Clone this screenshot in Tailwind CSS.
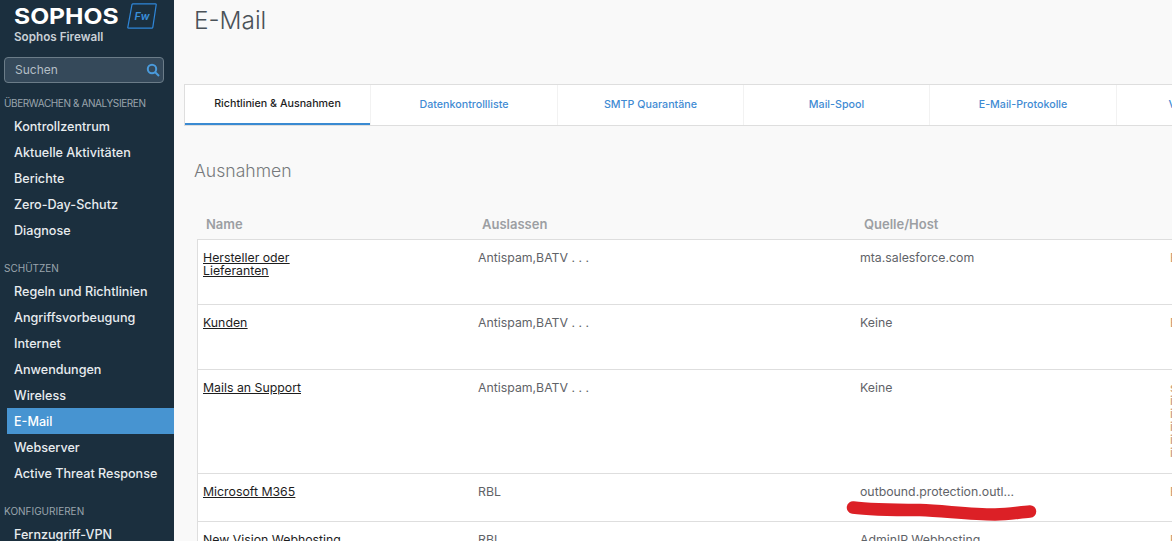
<!DOCTYPE html>
<html lang="de">
<head>
  <meta charset="UTF-8" />
  <title>Sophos Firewall - E-Mail</title>
  <script src="https://cdn.jsdelivr.net/npm/@tailwindcss/browser@4"></script>
</head>
<body class="h-[541px] w-[1172px] overflow-hidden bg-[#f9f9f9] font-['Inter',sans-serif] text-[#5f6368]">
  <div class="flex h-[541px]">

    <!-- Sidebar -->
    <aside class="w-[174px] h-[541px] shrink-0 overflow-hidden bg-[#1b2f3e] text-[12.6px] font-medium text-[#e8ecef]">
      <div class="relative h-[57px] pl-[14px] pt-[4px]">
        <div class="origin-left scale-x-[1.12] text-[22px] font-bold leading-[24px] text-white">SOPHOS</div>
        <div class="mt-[2px] text-[11.7px] font-semibold leading-[15px] text-[#c9d0d6]">Sophos Firewall</div>
        <svg class="absolute left-[127px] top-[3px]" width="30" height="26" viewBox="0 0 30 26" fill="none">
          <path d="M5 1.5Q5.3 .8 6 .8H28.5Q29.4 .8 29.2 1.7L25.8 24.3Q25.6 25.2 24.7 25.2H1.5Q.6 25.2 .8 24.3Z" stroke="#2f86d8" stroke-width="1.2" />
          <text x="7.5" y="17" font-size="10.5" font-style="italic" font-weight="600" fill="#3a8fdc" font-family="Inter, sans-serif">Fw</text>
        </svg>
      </div>
      <div class="ml-[4px] flex h-[26px] w-[160px] items-center justify-between rounded-[4px] border border-[#6b7c88] bg-[#35495a] pl-[10px] pr-[3px] text-[12px] font-normal text-[#b4bec5]">
        <span>Suchen</span>
        <svg width="14" height="14" viewBox="0 0 14 14" fill="none" stroke="#4a9bdc" stroke-width="2">
          <circle cx="6" cy="6" r="4.2" />
          <path d="M9 9l4 4" />
        </svg>
      </div>

      <div class="mt-[14px] pl-[4px] text-[10px] font-normal leading-[12px] tracking-[-0.4px] text-[#9aa5ad]">ÜBERWACHEN &amp; ANALYSIEREN</div>
      <nav class="mt-[5px]">
        <div class="flex h-[26px] items-center pl-[14px]">Kontrollzentrum</div>
        <div class="flex h-[26px] items-center pl-[14px]">Aktuelle Aktivitäten</div>
        <div class="flex h-[26px] items-center pl-[14px]">Berichte</div>
        <div class="flex h-[26px] items-center pl-[14px]">Zero-Day-Schutz</div>
        <div class="flex h-[26px] items-center pl-[14px]">Diagnose</div>
      </nav>

      <div class="mt-[18px] pl-[4px] text-[10px] font-normal leading-[12px] text-[#9aa5ad]">SCHÜTZEN</div>
      <nav class="mt-[4px]">
        <div class="flex h-[26px] items-center pl-[14px] pt-[2px]">Regeln und Richtlinien</div>
        <div class="flex h-[26px] items-center pl-[14px] pt-[2px]">Angriffsvorbeugung</div>
        <div class="flex h-[26px] items-center pl-[14px] pt-[2px]">Internet</div>
        <div class="flex h-[26px] items-center pl-[14px] pt-[2px]">Anwendungen</div>
        <div class="flex h-[26px] items-center pl-[14px] pt-[2px]">Wireless</div>
        <div class="ml-[7px] flex h-[26px] items-center bg-[#4794d1] pl-[7px] pt-[2px] text-white">E-Mail</div>
        <div class="flex h-[26px] items-center pl-[14px] pt-[2px]">Webserver</div>
        <div class="flex h-[26px] items-center pl-[14px] pt-[2px]">Active Threat Response</div>
      </nav>

      <div class="mt-[19px] pl-[4px] text-[10px] font-normal leading-[12px] text-[#9aa5ad]">KONFIGURIEREN</div>
      <nav class="mt-[4px]">
        <div class="flex h-[26px] items-center pl-[14px] pt-[2px]">Fernzugriff-VPN</div>
      </nav>
    </aside>

    <!-- Main -->
    <main class="h-[541px] min-w-0 flex-1 overflow-hidden">
      <h1 class="pl-[20px] pt-[3px] text-[24.4px] font-light leading-[34px] text-[#4a5258]">E-Mail</h1>

      <div class="ml-[10px] mt-[47px] flex h-[42px] w-[1140px] border-y border-l border-[#dedede] bg-white text-[10.7px] font-medium text-[#3f8bd3]">
        <div class="flex w-[185px] shrink-0 items-center justify-center border-b-2 border-[#3a8ad2] text-[#1d1d1d]">Richtlinien &amp; Ausnahmen</div>
        <div class="flex w-[187px] shrink-0 items-center justify-center border-l border-[#f2f2f2] pt-[1px]">Datenkontrollliste</div>
        <div class="flex w-[186px] shrink-0 items-center justify-center border-l border-[#f2f2f2] pt-[1px]">SMTP Quarantäne</div>
        <div class="flex w-[186px] shrink-0 items-center justify-center border-l border-[#f2f2f2] pt-[1px]">Mail-Spool</div>
        <div class="flex w-[187px] shrink-0 items-center justify-center border-l border-[#f2f2f2] pt-[1px]">E-Mail-Protokolle</div>
        <div class="flex w-[186px] shrink-0 items-center justify-center border-l border-[#f2f2f2] pr-[6px] pt-[1px]">Verschiedenes</div>
      </div>

      <h2 class="pl-[20px] pt-[33px] text-[17.6px] font-light leading-[24px] text-[#77797c]">Ausnahmen</h2>

      <div class="ml-[23px] mt-[30px] w-[1100px] text-[12.3px] leading-[13px]">
        <div class="grid h-[26px] grid-cols-[275px_382px_311px_1fr] pt-[5px] text-[13px] font-semibold text-[#9c9fa3]">
          <div class="pl-[9px]">Name</div>
          <div class="pl-[10px]">Auslassen</div>
          <div class="pl-[10px]">Quelle/Host</div>
          <div></div>
        </div>
        <div class="border-t border-l border-[#dedede] bg-white">
          <div class="grid h-[65px] grid-cols-[280px_382px_310px_1fr] border-b border-[#dedede] pt-[11px]">
            <div class="pl-[5px] text-[#1d1d1d] underline"><a>Hersteller oder<br />Lieferanten</a></div>
            <div>Antispam,BATV . . .</div>
            <div>mta.salesforce.com</div>
            <div class="text-[#c9976d]">E</div>
          </div>
          <div class="grid h-[65px] grid-cols-[280px_382px_310px_1fr] border-b border-[#dedede] pt-[11px]">
            <div class="pl-[5px] text-[#1d1d1d] underline"><a>Kunden</a></div>
            <div>Antispam,BATV . . .</div>
            <div>Keine</div>
            <div class="text-[#c9976d]">E</div>
          </div>
          <div class="grid h-[104px] grid-cols-[280px_382px_310px_1fr] border-b border-[#dedede] pt-[11px]">
            <div class="pl-[5px] text-[#1d1d1d] underline"><a>Mails an Support</a></div>
            <div>Antispam,BATV . . .</div>
            <div>Keine</div>
            <div class="text-[#c9976d]">s<br />i<br />i<br />i<br />i<br />i</div>
          </div>
          <div class="relative grid h-[48px] grid-cols-[280px_382px_310px_1fr] border-b border-[#dedede] pt-[11px]">
            <div class="pl-[5px] text-[#1d1d1d] underline"><a>Microsoft M365</a></div>
            <div>RBL</div>
            <div>outbound.protection.outl...</div>
            <div class="text-[#c9976d]">E</div>
            <svg class="absolute left-[647px] top-[25px]" width="194" height="24" viewBox="0 0 194 24" fill="none">
              <path d="M8 8.5C25 11 45 11 75 11C100 12 125 15.5 150 15.5C165 15.5 175 13 185 12.5" stroke="#dc2026" stroke-width="12.5" stroke-linecap="round" />
            </svg>
          </div>
          <div class="grid h-[48px] grid-cols-[280px_382px_310px_1fr] pt-[11px]">
            <div class="pl-[5px] text-[#1d1d1d] underline"><a>New Vision Webhosting</a></div>
            <div>RBL</div>
            <div>AdminIP,Webhosting</div>
            <div class="text-[#c9976d]">E</div>
          </div>
        </div>
      </div>
    </main>
  </div>
</body>
</html>
